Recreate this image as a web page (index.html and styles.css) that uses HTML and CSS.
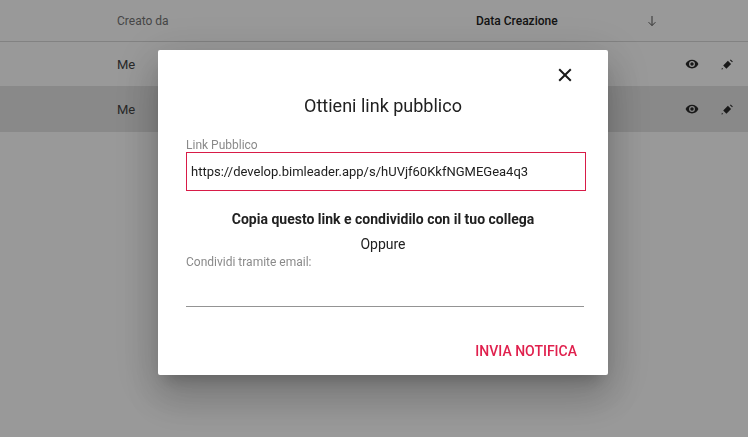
FILE: index.html
```html
<!DOCTYPE html>
<html lang="it">
<head>
<meta charset="utf-8">
<title>Ottieni link pubblico</title>
<link rel="stylesheet" href="styles.css">
</head>
<body>
<div class="table">
  <div class="row head">
    <span class="c-user">Creato da</span>
    <span class="c-date">Data Creazione</span>
    <svg class="arrow" width="12" height="12" viewBox="0 0 12 12"><path d="M6 1v9.500M2.600 7.200 6 10.600l3.400-3.400" fill="none" stroke="#555" stroke-width="1"/></svg>
  </div>
  <div class="row item">
    <span class="c-user">Me</span>
    <span class="actions">
      <svg class="eye" width="14" height="14" viewBox="0 0 24 24"><path fill="#2b2b2b" d="M12 4.500C7 4.500 2.700 7.600 1 12c1.700 4.400 6 7.500 11 7.500s9.300-3.100 11-7.500c-1.700-4.400-6-7.500-11-7.500zM12 17a5 5 0 1 1 0-10 5 5 0 0 1 0 10zm0-8a3 3 0 1 0 0 6 3 3 0 0 0 0-6z"/></svg>
      <svg class="pen" width="14" height="14" viewBox="0 0 24 24"><path fill="#2b2b2b" d="M2.500 21.500l.9-3 2.100 2.100zM5.500 14.500l8-8 5.500 5.500-8 8zM17 5.500l1.300-1.300L22 7.900l-1.300 1.300z"/></svg>
    </span>
  </div>
  <div class="row item active">
    <span class="c-user">Me</span>
    <span class="actions">
      <svg class="eye" width="14" height="14" viewBox="0 0 24 24"><path fill="#2b2b2b" d="M12 4.500C7 4.500 2.700 7.600 1 12c1.700 4.400 6 7.500 11 7.500s9.300-3.100 11-7.500c-1.700-4.400-6-7.500-11-7.500zM12 17a5 5 0 1 1 0-10 5 5 0 0 1 0 10zm0-8a3 3 0 1 0 0 6 3 3 0 0 0 0-6z"/></svg>
      <svg class="pen" width="14" height="14" viewBox="0 0 24 24"><path fill="#2b2b2b" d="M2.500 21.500l.9-3 2.100 2.100zM5.500 14.500l8-8 5.500 5.500-8 8zM17 5.500l1.300-1.300L22 7.900l-1.300 1.300z"/></svg>
    </span>
  </div>
</div>
<div class="overlay"></div>
<div class="modal">
  <div class="close-row">
    <svg width="14" height="14" viewBox="0 0 14 14"><path d="M1.200 1.200 12.800 12.800M12.800 1.200 1.200 12.800" stroke="#1a1a1a" stroke-width="2" fill="none"/></svg>
  </div>
  <h2 class="title">Ottieni link pubblico</h2>
  <label class="label">Link Pubblico</label>
  <div class="link-box">https://develop.bimleader.app/s/hUVjf60KkfNGMEGea4q3</div>
  <p class="hint">Copia questo link e condividilo con il tuo collega</p>
  <p class="or">Oppure</p>
  <label class="label email-label">Condividi tramite email:</label>
  <div class="email-input"></div>
  <div class="footer"><span class="send">INVIA NOTIFICA</span></div>
</div>
</body>
</html>
```
FILE: styles.css
```css
* { box-sizing: border-box; }
html, body { margin: 0; height: 100%; overflow: hidden; }
body { font-family: Roboto, "Noto Sans", sans-serif; background: #fff; color: #212121; }
.row { display: flex; align-items: center; padding-left: 117px; font-size: 13px; }
.head { height: 42px; border-bottom: 1px solid #d9d9d9; color: #757575; font-size: 12px; }
.c-user { width: 359px; }
.c-date { width: 170px; color: #222; font-weight: 500; font-size: 12px; }
.item { height: 44px; font-size: 13px; color: #444; position: relative; }
.active { background: #e4e4e4; height: 46px; }
.actions { margin-left: auto; display: flex; gap: 21px; padding-right: 14px; }
.overlay { position: fixed; inset: 0; background: rgba(0,0,0,.4); }
.modal {
  position: fixed; left: 158px; top: 50px; width: 450px; height: 325px;
  background: #fff; border-radius: 2px; padding: 0 22px 0 28px;
  box-shadow: 0 11px 15px -7px rgba(0,0,0,.2), 0 24px 38px 3px rgba(0,0,0,.14), 0 9px 46px 8px rgba(0,0,0,.12);
  display: flex; flex-direction: column;
}
.close-row { display: flex; justify-content: flex-end; padding: 18px 16px 0 0; height: 44px; margin-right: -2px; }
.title { margin: 0; width: 394px; font-size: 18px; font-weight: 400; line-height: 24px; height: 44px; text-align: center; color: #212121; }
.label { font-size: 12px; line-height: 14px; color: #8a8a8a; display: block; }
.link-box { width: 400px; height: 39px; border: 1px solid #d81b47; padding-left: 4px; font-size: 13px; line-height: 37px; color: #212121; }
.hint { margin: 19px 0 0; width: 394px; font-size: 14px; line-height: 18px; font-weight: 700; text-align: center; color: #212121; }
.or { margin: 7px 0 0; width: 394px; font-size: 14px; line-height: 18px; text-align: center; color: #212121; }
.email-label { margin-top: 2px; }
.email-input { width: 398px; height: 38px; border-bottom: 1px solid #949494; }
.footer { display: flex; justify-content: flex-end; padding: 35px 3px 0 0; width: 394px; }
.send { font-size: 14px; line-height: 18px; font-weight: 500; color: #e0204d; }
```
